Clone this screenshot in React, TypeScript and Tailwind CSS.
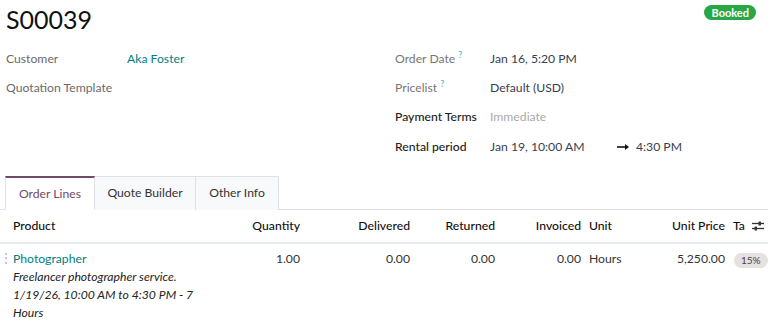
import React from 'react';

const font = { fontFamily: 'Lato, "Noto Sans", sans-serif' };

const Help = () => <sup className="ml-[3px] text-[9px] font-semibold text-[#6bb8bd]">?</sup>;

const FieldRow = ({
  label,
  labelClass = 'text-[#6b6b6b]',
  labelWidth,
  children,
}: {
  label: React.ReactNode;
  labelClass?: string;
  labelWidth: string;
  children?: React.ReactNode;
}) => (
  <div className="flex h-[29.4px] items-center">
    <div className={`${labelWidth} shrink-0 ${labelClass}`}>{label}</div>
    <div className="flex-1 text-[#374151]">{children}</div>
  </div>
);

const SlidersIcon = () => (
  <svg width="14" height="12" viewBox="0 0 14 12" className="text-[#333]">
    <line x1="1" y1="3.5" x2="13" y2="3.5" stroke="currentColor" strokeWidth="1.3" />
    <line x1="1" y1="8.5" x2="13" y2="8.5" stroke="currentColor" strokeWidth="1.3" />
    <rect x="7.5" y="1.5" width="2.5" height="4" rx="0.6" fill="currentColor" />
    <rect x="3.5" y="6.5" width="2.5" height="4" rx="0.6" fill="currentColor" />
  </svg>
);

export default function App() {
  return (
    <div className="w-[768px] h-[328px] overflow-hidden bg-white text-[12.2px] text-[#222]" style={font}>
      <div className="flex justify-between pl-[6px] pr-[12px]">
        <h1 className="pt-[2px] text-[25px] leading-[34px] text-[#111]">S00039</h1>
        <span className="mt-[5px] h-[15px] rounded-full bg-[#28a745] px-[7px] text-[11px] font-bold leading-[15px] text-white">
          Booked
        </span>
      </div>

      <div className="mt-[8px] flex pl-[6px]">
        <div className="w-[389px]">
          <FieldRow label="Customer" labelWidth="w-[121px]">
            <span className="text-[#017e84]">Aka Foster</span>
          </FieldRow>
          <FieldRow label="Quotation Template" labelWidth="w-[121px]" />
        </div>
        <div className="flex-1">
          <FieldRow
            label={
              <>
                Order Date
                <Help />
              </>
            }
            labelClass="text-[#777]"
            labelWidth="w-[95px]"
          >
            Jan 16, 5:20 PM
          </FieldRow>
          <FieldRow
            label={
              <>
                Pricelist
                <Help />
              </>
            }
            labelClass="text-[#777]"
            labelWidth="w-[95px]"
          >
            Default (USD)
          </FieldRow>
          <FieldRow label="Payment Terms" labelClass="text-[#222] font-medium" labelWidth="w-[95px]">
            <span className="text-[#aaa]">Immediate</span>
          </FieldRow>
          <FieldRow label="Rental period" labelClass="text-[#222] font-medium" labelWidth="w-[95px]">
            <div className="flex items-center">
              <span className="w-[127px]">Jan 19, 10:00 AM</span>
              <span className="w-[19px] text-[#111]">
                <svg width="12" height="8" viewBox="0 0 12 8">
                  <path d="M0 4h9" stroke="currentColor" strokeWidth="1.6" />
                  <path d="M8 1l4 3-4 3z" fill="currentColor" />
                </svg>
              </span>
              <span>4:30 PM</span>
            </div>
          </FieldRow>
        </div>
      </div>

      <div className="mt-[14px] flex border-b border-[#dee2e6] pl-[5px]">
        <div className="-mb-px h-[34px] w-[90px] border-x border-t-2 border-b border-[#dee2e6] border-t-[#714b67] border-b-white bg-white text-center leading-[31px] text-[#714b67]">
          Order Lines
        </div>
        <div className="-mb-px h-[34px] w-[101px] border-r border-t border-[#dee2e6] bg-[#f8f9fa] text-center leading-[32px] text-[#333]">
          Quote Builder
        </div>
        <div className="-mb-px h-[34px] w-[83px] border-r border-t border-[#dee2e6] bg-[#f8f9fa] text-center leading-[32px] text-[#333]">
          Other Info
        </div>
      </div>

      <div className="flex h-[34px] items-center border-b-2 border-[#e9ecef] pt-[1px] font-medium text-[#111]">
        <div className="w-[230px] pl-[13px]">Product</div>
        <div className="w-[70px] text-right">Quantity</div>
        <div className="w-[110px] text-right">Delivered</div>
        <div className="w-[85px] text-right">Returned</div>
        <div className="w-[86px] text-right">Invoiced</div>
        <div className="w-[60px] pl-[8px]">Unit</div>
        <div className="w-[84px] text-right">Unit Price</div>
        <div className="flex flex-1 items-center gap-[6px] pl-[8px]">
          <span>Ta</span>
          <SlidersIcon />
        </div>
      </div>

      <div className="relative flex pt-[6px] text-[#333]">
        <span className="absolute left-0 top-[7px] text-[12px] leading-[14px] text-[#aaa]">⋮</span>
        <div className="w-[230px] pl-[13px] leading-[18.3px]">
          <div className="text-[#017e84]">Photographer</div>
          <div className="italic text-[#222]">
            Freelancer photographer service.
            <br />
            1/19/26, 10:00 AM to 4:30 PM - 7
            <br />
            Hours
          </div>
        </div>
        <div className="w-[70px] text-right leading-[18.3px]">1.00</div>
        <div className="w-[110px] text-right leading-[18.3px]">0.00</div>
        <div className="w-[85px] text-right leading-[18.3px]">0.00</div>
        <div className="w-[86px] text-right leading-[18.3px]">0.00</div>
        <div className="w-[60px] pl-[8px] leading-[18.3px]">Hours</div>
        <div className="w-[84px] text-right leading-[18.3px]">5,250.00</div>
        <div className="pl-[9px] pt-[1px]">
          <span className="inline-block h-[15px] rounded-full bg-[#e6e0e0] px-[7px] text-[10px] leading-[15px] text-[#444]">
            15%
          </span>
        </div>
      </div>
    </div>
  );
}
